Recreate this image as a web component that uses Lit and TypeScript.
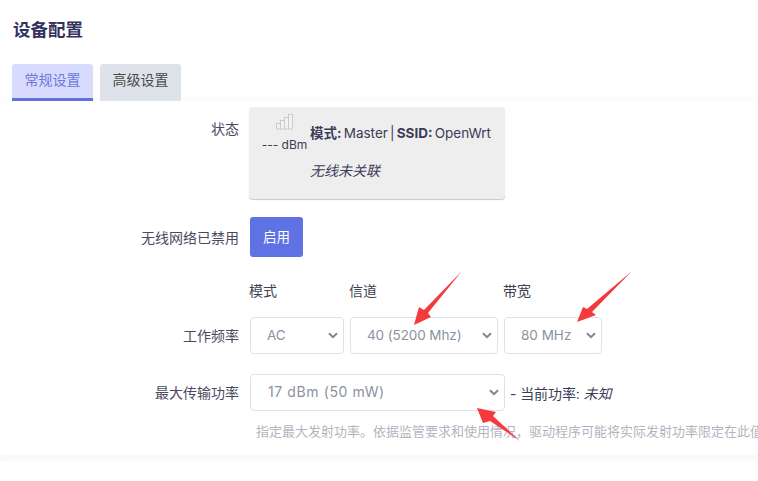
import { LitElement, html, css, svg } from "lit";
import { customElement } from "lit/decorators.js";

const chevron = html`<svg class="chev" width="10" height="7" viewBox="0 0 10 7"><path d="M1 1.2 5 5.2 9 1.2" fill="none" stroke="#7d8694" stroke-width="2"/></svg>`;

@customElement("app-root")
export class AppRoot extends LitElement {
  static styles = css`
    :host {
      display: block;
      position: relative;
      width: 758px;
      height: 481px;
      overflow: hidden;
      background: #fff;
      color: #32325d;
      font-family: "Inter", "Noto Sans CJK SC", sans-serif;
      font-size: 14px;
    }
    h2 {
      margin: 0;
      padding: 20px 0 0 13px;
      height: 64px;
      box-sizing: border-box;
      font-size: 17.5px;
      line-height: 20px;
      font-weight: 700;
      color: #32325d;
    }
    .tabs { display: flex; gap: 7px; padding-left: 12px; height: 37px; }
    .tab {
      width: 81px;
      box-sizing: border-box;
      border-radius: 3px 3px 0 0;
      text-align: center;
      line-height: 32px;
      background: #dee3e9;
      color: #4a4a4a;
    }
    .tab.on {
      background: #d8dafe;
      color: #6a7bdc;
      border-bottom: 3px solid #5e72d8;
    }
    .card {
      height: 354px;
      box-sizing: border-box;
      padding-top: 6px;
      background: #fff;
      box-shadow: 0 -2px 8px rgba(0, 0, 0, 0.025), 0 6px 0 #fafafa;
    }
    .row { display: grid; grid-template-columns: 239px 1fr; column-gap: 11px; }
    .label { text-align: right; color: #4a4a5e; font-size: 14px; }
    .status-label { line-height: 44px; }
    .status {
      margin-left: -1px;
      width: 256px;
      height: 92px;
      box-sizing: border-box;
      display: flex;
      background: #eeeeee;
      border-radius: 4px;
      box-shadow: 0 1px 1px rgba(0, 0, 0, 0.22);
      font-size: 14px;
    }
    .sig {
      width: 61px;
      flex: none;
      display: flex;
      flex-direction: column;
      align-items: center;
      padding: 7px 0 0 10px;
      box-sizing: border-box;
      color: #3b3b58;
    }
    .sig svg { display: block; }
    .sig span { margin-top: 6px; line-height: 18px; white-space: nowrap; font-size: 12px; }
    .info { padding-top: 16px; line-height: 20px; color: #3b3b58; white-space: nowrap; }
    .line { font-size: 13.5px; word-spacing: -1.6px; }
    .info b { font-weight: 700; }
    .info i { display: block; margin-top: 18px; }
    .r2 { margin-top: 18px; align-items: center; }
    .btn {
      width: 53px;
      height: 40px;
      border-radius: 3px;
      background: #5e72e4;
      color: #fff;
      font-size: 13.5px;
      line-height: 40px;
      text-align: center;
    }
    .r3 { margin-top: 24px; }
    .colhead { display: flex; height: 36px; font-size: 14px; color: #3f3f55; margin-left: -1px; padding-top: 1px; box-sizing: border-box; line-height: 18px; }
    .colhead span:nth-child(1) { width: 100px; }
    .colhead span:nth-child(2) { width: 154px; }
    .selects { display: flex; gap: 6px; }
    .sel {
      height: 37px;
      box-sizing: border-box;
      border: 1px solid #dee2e6;
      border-radius: 4px;
      display: flex;
      align-items: center;
      justify-content: space-between;
      padding: 0 5px 2px 16px;
      color: #8a92a0;
      font-size: 13.5px;
      background: #fff;
      white-space: nowrap;
    }
    .sel .chev { margin-top: 2px; }
    .w1 { width: 94px; }
    .w2 { width: 148px; letter-spacing: -0.1px; }
    .w3 { width: 98px; }
    .w4 { width: 255px; letter-spacing: 0.6px; font-size: 14px; padding-left: 17px; }
    .freq { line-height: 37px; }
    .r4 { margin-top: 20px; }
    .power { display: flex; align-items: center; gap: 5px; color: #3b3b58; font-size: 14px; white-space: nowrap; }
    .power span { letter-spacing: -0.1px; }
    .desc {
      margin: 11px 0 0 6px;
      line-height: 18px;
      font-size: 13px;
      color: #b4b4c0;
      white-space: nowrap;
    }
    .arrows { position: absolute; inset: 0; pointer-events: none; }
  `;

  render() {
    return html`
      <h2>设备配置</h2>
      <div class="tabs">
        <div class="tab on">常规设置</div>
        <div class="tab">高级设置</div>
      </div>
      <div class="card">
        <div class="row">
          <div class="label status-label">状态</div>
          <div class="status">
            <div class="sig">
              <svg width="17" height="16" viewBox="0 0 17 16" fill="#f2f2f2" stroke="#cbcbcb">
                <rect x="0.5" y="9.5" width="4" height="5.5"/>
                <rect x="4.5" y="6.5" width="4" height="8.5"/>
                <rect x="8.5" y="3.5" width="4" height="11.5"/>
                <rect x="12.5" y="0.5" width="4" height="14.5"/>
              </svg>
              <span>--- dBm</span>
            </div>
            <div class="info">
              <div class="line"><b>模式:</b> Master | <b>SSID:</b> OpenWrt</div>
              <i>无线未关联</i>
            </div>
          </div>
        </div>
        <div class="row r2">
          <div class="label">无线网络已禁用</div>
          <div class="btn">启用</div>
        </div>
        <div class="row r3">
          <div class="label freq" style="grid-row:2">工作频率</div>
          <div class="colhead" style="grid-column:2">
            <span>模式</span><span>信道</span><span>带宽</span>
          </div>
          <div class="selects" style="grid-column:2;grid-row:2">
            <div class="sel w1">AC${chevron}</div>
            <div class="sel w2">40 (5200 Mhz)${chevron}</div>
            <div class="sel w3">80 MHz${chevron}</div>
          </div>
        </div>
        <div class="row r4">
          <div class="label freq">最大传输功率</div>
          <div class="power">
            <div class="sel w4">17 dBm (50 mW)${chevron}</div>
            <span>- 当前功率: <i>未知</i></span>
          </div>
        </div>
        <div class="row">
          <div></div>
          <div class="desc">指定最大发射功率。依据监管要求和使用情况，驱动程序可能将实际发射功率限定在此值以下</div>
        </div>
      </div>
      <svg class="arrows" width="758" height="481" viewBox="0 0 758 481">
        ${svg`
          <polygon fill="#f5393c" points="462,271 428,313 431,317 414,325 419,307 424,310"/>
          <polygon fill="#f5393c" points="632,271 592,312 596,315 577,322 583,307 587,309"/>
          <polygon fill="#f5393c" points="520,441 490,421 483,423 477,408 496,412 493,416"/>
        `}
      </svg>
    `;
  }
}
